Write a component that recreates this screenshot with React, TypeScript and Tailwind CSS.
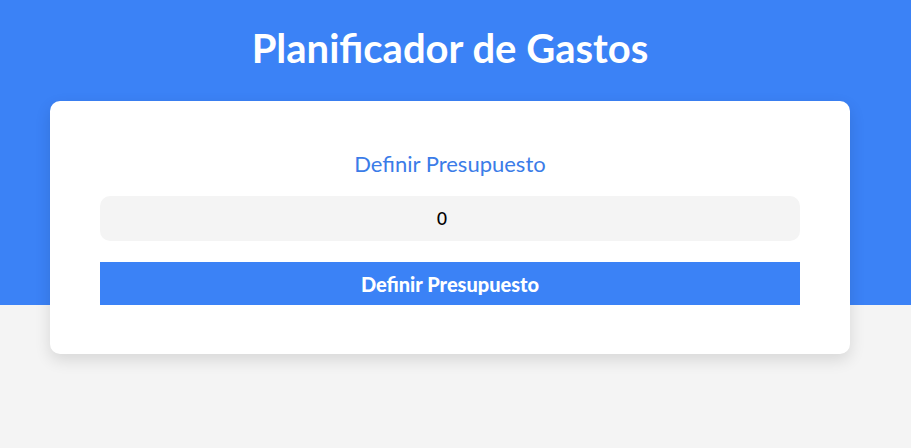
import { useState } from "react";

const App = () => {
    const [presupuesto, setPresupuesto] = useState("0");

    return (
        <div className="min-h-screen w-full bg-[linear-gradient(to_bottom,#3b82f6_305px,#f4f4f4_305px)] font-['Lato',sans-serif]">
            <div className="w-[900px]">
                <header className="pt-[24px] pb-[29px]">
                    <h1 className="text-center text-[40px] leading-[48px] font-bold text-white">Planificador de Gastos</h1>
                </header>
                <div className="mx-auto w-[800px] bg-white rounded-[10px] shadow-[0_6px_16px_rgba(0,0,0,0.12)] px-[50px] pt-[48px] pb-[49px]">
                    <form className="flex flex-col" onSubmit={(e) => e.preventDefault()}>
                        <label className="text-center text-[22px] leading-[30px] text-[#3b7ce8]">Definir Presupuesto</label>
                        <input
                            type="number"
                            value={presupuesto}
                            onChange={(e) => setPresupuesto(e.target.value)}
                            className="mt-[17px] h-[45px] w-full rounded-[10px] bg-[#f4f4f4] pr-[16px] text-center text-[18px] text-black font-['DejaVu_Sans',sans-serif] outline-none [appearance:textfield] [&::-webkit-inner-spin-button]:appearance-none"
                        />
                        <button type="submit" className="mt-[21px] h-[43px] w-full bg-[#3b82f6] text-white font-black text-[20px]">
                            Definir Presupuesto
                        </button>
                    </form>
                </div>
            </div>
        </div>
    );
};

export default App;
